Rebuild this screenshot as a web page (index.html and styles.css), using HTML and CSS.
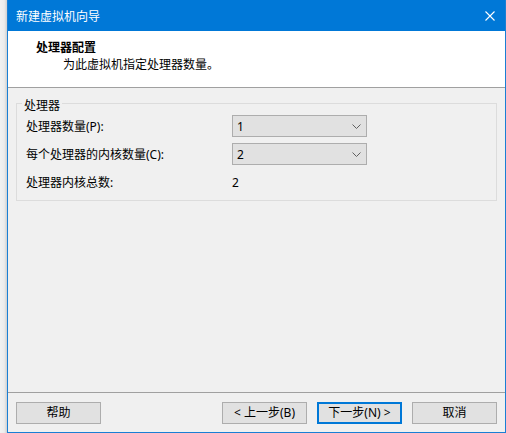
FILE: index.html
```html
<!DOCTYPE html>
<html lang="zh-CN">
<head>
<meta charset="utf-8">
<title>新建虚拟机向导</title>
<link rel="stylesheet" href="styles.css">
</head>
<body>
<div class="screen">
  <div class="backdrop"></div>
  <div class="window">
    <div class="titlebar">
      <span class="title">新建虚拟机向导</span>
      <span class="close" aria-label="关闭">
        <svg width="10" height="10" viewBox="0 0 10 10"><path d="M0.5 0.5 L9.5 9.5 M9.5 0.5 L0.5 9.5" stroke="#fff" stroke-width="1.1" fill="none"/></svg>
      </span>
    </div>
    <div class="header">
      <div class="h-title">处理器配置</div>
      <div class="h-sub">为此虚拟机指定处理器数量。</div>
    </div>
    <div class="content">
      <div class="group">
        <div class="legend">处理器</div>
        <div class="row">
          <span class="label">处理器数量(P):</span>
          <div class="combo"><span>1</span><svg class="chev" width="9" height="5" viewBox="0 0 9 5"><path d="M0.5 0.5 L4.5 4.5 L8.5 0.5" stroke="#606060" stroke-width="1" fill="none"/></svg></div>
        </div>
        <div class="row">
          <span class="label">每个处理器的内核数量(C):</span>
          <div class="combo"><span>2</span><svg class="chev" width="9" height="5" viewBox="0 0 9 5"><path d="M0.5 0.5 L4.5 4.5 L8.5 0.5" stroke="#606060" stroke-width="1" fill="none"/></svg></div>
        </div>
        <div class="row">
          <span class="label">处理器内核总数:</span>
          <span class="value">2</span>
        </div>
      </div>
    </div>
    <div class="footer">
      <button class="btn">帮助</button>
      <div class="spacer"></div>
      <button class="btn">&lt; 上一步(B)</button>
      <button class="btn default">下一步(N) &gt;</button>
      <button class="btn">取消</button>
    </div>
  </div>
</div>
</body>
</html>
```

FILE: styles.css
```css
* { box-sizing: border-box; }
html, body { margin: 0; padding: 0; }
body {
  width: 506px;
  height: 433px;
  overflow: hidden;
  font-family: "Noto Sans", "Noto Sans CJK SC", sans-serif;
  font-size: 12px;
  color: #000;
  background: #f0f0f0;
}
.screen {
  display: flex;
  width: 506px;
  height: 433px;
}
.backdrop {
  width: 7px;
  flex: none;
  background: linear-gradient(to right, #f2f2f2, #ececec 60%, #d0d0d0);
}
.window {
  flex: 1;
  display: flex;
  flex-direction: column;
  border-left: 1px solid #1a7fd4;
  border-right: 1px solid #1a7fd4;
  border-bottom: 1px solid #1a7fd4;
  background: #f0f0f0;
}
.titlebar {
  height: 31px;
  flex: none;
  background: #0078d7;
  display: flex;
  align-items: center;
  padding-left: 8px;
  padding-right: 10px;
}
.title {
  color: #fff;
  font-size: 12px;
  line-height: 16px;
  flex: 1;
  font-family: "Noto Sans CJK SC", sans-serif;
}
.close {
  display: flex;
  width: 10px;
  height: 10px;
}
.header {
  height: 57px;
  flex: none;
  background: #fff;
  border-bottom: 1px solid #a0a0a0;
  padding: 7px 0 0 28px;
  font-family: "Noto Sans CJK SC", sans-serif;
}
.h-title {
  font-weight: bold;
  line-height: 17px;
}
.h-sub {
  line-height: 17px;
  padding-left: 27px;
}
.content {
  flex: 1;
  padding: 15px 8px 0 8px;
}
.group {
  border: 1px solid #dcdcdc;
  display: flex;
  flex-direction: column;
  padding: 0 0 7px 9px;
}
.legend {
  align-self: flex-start;
  margin: -7px 0 0 -4px;
  padding: 0 2px;
  background: #f0f0f0;
  line-height: 16px;
  font-family: "Noto Sans CJK SC", sans-serif;
}
.row {
  display: flex;
  align-items: center;
  height: 22px;
  margin-top: 6px;
}
.row:first-of-type { margin-top: 0; }
.legend + .row { margin-top: 2px; }
.label {
  width: 206px;
  flex: none;
  line-height: 16px;
  padding-top: 2px;
}
.value {
  line-height: 16px;
  padding-top: 2px;
}
.combo {
  width: 135px;
  height: 22px;
  border: 1px solid #adadad;
  background: #e1e1e1;
  display: flex;
  align-items: center;
  justify-content: space-between;
  padding: 1px 5px 0 4px;
  line-height: 16px;
}
.chev { display: block; }
.footer {
  flex: none;
  height: 40px;
  border-top: 1px solid #a0a0a0;
  display: flex;
  align-items: flex-start;
  gap: 10px;
  padding: 9px 8px 0 8px;
}
.spacer { flex: 1; }
.btn {
  width: 85px;
  height: 22px;
  border: 1px solid #adadad;
  background: #e1e1e1;
  font-family: "Noto Sans", "Noto Sans CJK SC", sans-serif;
  font-size: 12px;
  color: #000;
  padding: 0;
  line-height: 16px;
}
.btn.default {
  border: 2px solid #0078d7;
}
```
